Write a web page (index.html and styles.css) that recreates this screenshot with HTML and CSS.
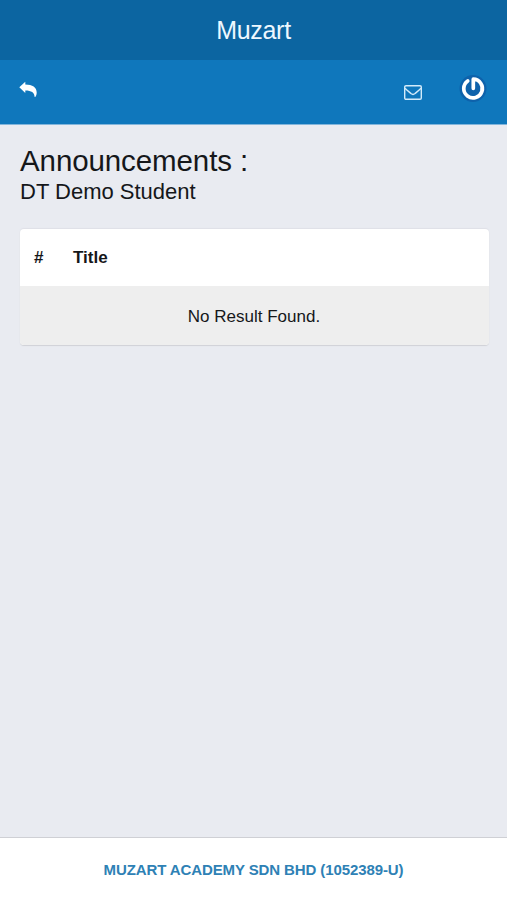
FILE: index.html
```html
<!DOCTYPE html>
<html lang="en">

<head>
    <meta charset="UTF-8">
    <meta name="viewport" content="width=device-width, initial-scale=1.0">
    <title>Muzart</title>
    <link rel="stylesheet" href="styles.css">
</head>

<body>
    <div class="page">
        <header class="title-bar">Muzart</header>

        <nav class="toolbar">
            <a href="#" class="tool back" aria-label="Back">
                <svg width="19" height="17" viewBox="0 0 19 17">
                    <path d="M0.300 6.200L6.300 0.700v2.700C13.500 3.400 17.700 6.300 17.700 11.400c0 1.900-.5 3.300-1.400 4.500-.3.300-.9.100-.8-.3C15.500 11.500 12.500 9.400 6.300 9.400v2.500z" fill="#fff"/>
                </svg>
            </a>
            <a href="#" class="tool mail" aria-label="Messages">
                <svg width="18" height="15" viewBox="0 0 18 15">
                    <rect x="0.700" y="0.700" width="16.600" height="13.600" rx="1.300" fill="none" stroke="#d3ebfa" stroke-width="1.400"/>
                    <path d="M1 3.300C3.300 5.700 5.500 7.200 7.300 8.800c1.300 1 2.100 1 3.400 0C12.500 7.200 14.700 5.700 17 3.300" fill="none" stroke="#d3ebfa" stroke-width="1.400"/>
                </svg>
            </a>
            <a href="#" class="tool power" aria-label="Account">
                <svg width="30" height="30" viewBox="0 0 30 30">
                    <circle cx="15" cy="15.500" r="13.500" fill="#0e62ab"/>
                    <path d="M9.700 7.900A9.300 9.300 0 1 0 15.300 6.200V15.300" fill="none" stroke="#fff" stroke-width="3.700" stroke-linecap="round" stroke-linejoin="round"/>
                </svg>
            </a>
        </nav>

        <main class="content">
            <h1>Announcements :</h1>
            <h2>DT Demo Student</h2>

            <table class="list">
                <thead>
                    <tr>
                        <th class="num">#</th>
                        <th>Title</th>
                    </tr>
                </thead>
                <tbody>
                    <tr>
                        <td colspan="2">No Result Found.</td>
                    </tr>
                </tbody>
            </table>
        </main>

        <footer class="footer">
            <a href="#">MUZART ACADEMY SDN BHD (1052389-U)</a>
        </footer>
    </div>
</body>

</html>
```
FILE: styles.css
```css
body {
    margin: 0;
    font-family: "Liberation Sans", Arial, sans-serif;
    background-color: #e9ebf1;
    color: #15171a;
}

.page {
    display: flex;
    flex-direction: column;
    height: 100vh;
}

.title-bar {
    height: 60px;
    line-height: 61px;
    background-color: #0c65a1;
    color: #edf8ff;
    font-size: 25px;
    letter-spacing: -0.3px;
    text-align: center;
}

.toolbar {
    display: flex;
    align-items: flex-start;
    box-sizing: border-box;
    height: 65px;
    padding: 0 19px;
    background-color: #0f77bc;
    border-bottom: 1px solid #82b5db;
}

.tool svg {
    display: block;
}

.back {
    margin-top: 21px;
}

.mail {
    margin-top: 25px;
    margin-left: auto;
}

.power {
    margin-top: 13px;
    margin-left: 36px;
}

.content {
    flex: 1;
    padding: 19px 18px 0 20px;
}

h1, h2 {
    margin: 0;
    font-weight: normal;
}

h1 {
    font-size: 29.5px;
    line-height: 34px;
    letter-spacing: -0.1px;
}

h2 {
    font-size: 22px;
    line-height: 27px;
}

.list {
    width: 100%;
    margin-top: 24px;
    border-spacing: 0;
    border-radius: 4px;
    background-color: #fff;
    box-shadow: 0 -1px 1px #dfe0e7, 0 1px 1px #d0d1d6;
    font-size: 17px;
}

.list th {
    height: 57px;
    padding: 0 14px;
    text-align: left;
}

.list .num {
    width: 11px;
}

.list td {
    height: 57px;
    padding: 2px 1px 0 0;
    background-color: #eee;
    border-radius: 0 0 4px 4px;
    text-align: center;
}

.footer {
    box-sizing: border-box;
    height: 63px;
    line-height: 63px;
    background-color: #fff;
    border-top: 1px solid #cfd0d5;
    font-size: 15px;
    font-weight: bold;
    letter-spacing: -0.1px;
    text-align: center;
}

.footer a {
    color: #2e81b5;
    text-decoration: none;
}
```
